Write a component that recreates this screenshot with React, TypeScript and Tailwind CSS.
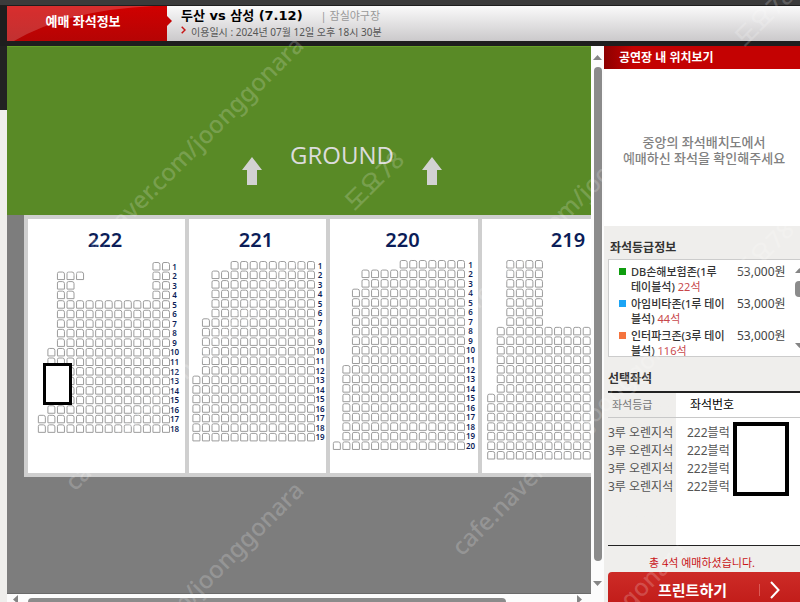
import React from "react";

type Range = [number, number];

interface Block {
  name: string;
  width: string;
  // x and y of the top right seat
  right: number;
  top: number;
  labelX?: number;
  // seats of each row, counted from the right
  rows: Range[][];
}

interface Grade {
  name: string;
  left: number;
  price: string;
  color: string;
}

const PITCH = 9.55;

const repeat = (count: number, ranges: Range[]): Range[][] =>
  Array.from({ length: count }, () => ranges);

const blocks: Block[] = [
  {
    name: "222",
    width: "w-[157px]",
    right: 134.5,
    top: 10.5,
    labelX: 146.5,
    rows: [
      [[0, 1]],
      [[0, 1], [9, 11]],
      ...repeat(2, [[0, 1], [10, 11]]),
      ...repeat(5, [[0, 11]]),
      ...repeat(7, [[0, 12]]),
      ...repeat(2, [[0, 13]]),
    ],
  },
  {
    name: "221",
    width: "w-[137px]",
    right: 118.5,
    top: 9.5,
    labelX: 131,
    rows: [
      [[0, 8]],
      ...repeat(5, [[0, 10]]),
      ...repeat(6, [[0, 11]]),
      ...repeat(7, [[0, 12]]),
    ],
  },
  {
    name: "220",
    width: "w-[148px]",
    right: 127.5,
    top: 8.5,
    labelX: 140.5,
    rows: [
      [[0, 6]],
      ...repeat(2, [[0, 10]]),
      ...repeat(8, [[0, 11]]),
      ...repeat(8, [[0, 12]]),
      [[0, 13]],
    ],
  },
  {
    name: "219",
    width: "w-[175px]",
    right: 158.5,
    top: 8.5,
    rows: [
      ...repeat(7, [[11, 14]]),
      ...repeat(7, [[0, 15]]),
      ...repeat(7, [[0, 16]]),
    ],
  },
];

const grades: Grade[] = [
  { name: "DB손해보험존(1루 테이블석)", left: 22, price: "53,000원", color: "bg-[#0f9d0f]" },
  { name: "아임비타존(1루 테이블석)", left: 44, price: "53,000원", color: "bg-[#1ba4f5]" },
  { name: "인터파크존(3루 테이블석)", left: 116, price: "53,000원", color: "bg-[#f5743e]" },
];

const tickets = [1, 2, 3, 4].map((id) => ({ id, grade: "3루 오렌지석", seat: "222블럭" }));

const watermarks = [
  { x: 73, y: 279, text: "cafe.naver.com/joonggonara" },
  { x: 75, y: 492, text: "cafe.naver.com/joonggonara" },
  { x: 73, y: 724, text: "cafe.naver.com/joonggonara" },
  { x: 462, y: 557, text: "cafe.naver.com/joonggonara" },
  { x: 460, y: 328, text: "cafe.naver.com/joonggonara" },
  { x: 456, y: 784, text: "cafe.naver.com/joonggonara" },
  { x: 355, y: 212, text: "도요78" },
  { x: 745, y: 48, text: "도요78" },
  { x: 745, y: 282, text: "도요78" },
];

const SeatBlock = ({ block }: { block: Block }) => {
  const seats: React.ReactNode[] = [];
  block.rows.forEach((ranges, row) => {
    const y = block.top + row * PITCH;
    ranges.forEach(([from, to]) => {
      for (let i = from; i <= to; i++) {
        const x = block.right - i * PITCH;
        seats.push(
          <path
            key={`${row}-${i}`}
            d={`M${x} ${y + 7.5}v-6q0-1.500 1.500-1.500h3.500q2 0 2 2v5.500z`}
          />
        );
      }
    });
  });

  return (
    <div className={`${block.width} shrink-0 bg-white pt-[9px]`}>
      <h2 className="pr-[3px] text-center text-[20px] leading-6 font-semibold text-[#0b1d58]">
        {block.name}
      </h2>
      <svg className="block h-[221px] w-full" aria-label={`${block.name} 좌석`}>
        <g fill="#fff" stroke="#9c9c9c" strokeWidth="1">
          {seats}
        </g>
        {block.labelX && (
          <g fill="#0b1d58" fontSize="8" fontWeight="600" textAnchor="middle">
            {block.rows.map((_, row) => (
              <text key={row} x={block.labelX} y={block.top + row * PITCH + 7}>
                {row + 1}
              </text>
            ))}
          </g>
        )}
        {block.name === "222" && (
          <rect x="16.5" y="112.5" width="26" height="39" fill="#fff" stroke="#000" strokeWidth="3" />
        )}
      </svg>
    </div>
  );
};

const UpArrow = () => (
  <svg width="20" height="28" viewBox="0 0 20 28" className="mt-4 shrink-0">
    <path d="M10 0L20 13H15V28H5V13H0z" fill="#d2d2d2" />
  </svg>
);

const Triangle = ({ className }: { className: string }) => (
  <svg width="9" height="5" viewBox="0 0 9 5" className={`shrink-0 ${className}`}>
    <path d="M4.500 0L9 5H0z" fill="#858585" />
  </svg>
);

const Header = () => (
  <header className="border-t-[5px] border-[#3b3b3b] bg-[#1e1e1e] pt-px pb-[5px] pl-[7px]">
    <div className="flex h-[35px] bg-gradient-to-b from-[#fafafa] to-[#cbc9cb]">
      <div className="relative flex w-[160px] shrink-0 items-center justify-center bg-gradient-to-b from-[#d00000] to-[#b50404] pb-[6px]">
        <svg className="absolute inset-0 h-full w-full" viewBox="0 0 160 35" preserveAspectRatio="none">
          <path d="M0 0H147Q60 4 7 35H0z" fill="#fff" fillOpacity=".18" />
        </svg>
        <svg className="absolute top-[10px] -right-[5px]" width="5" height="10" viewBox="0 0 5 10">
          <path d="M0 0L5 5L0 10z" fill="#c40202" />
        </svg>
        <h1 className="relative pr-2 text-[13px] leading-5 font-bold text-white">예매 좌석정보</h1>
      </div>
      <div className="pl-[14px]">
        <div className="flex items-center">
          <p className="font-['DejaVu_Sans','Noto_Sans_CJK_KR',sans-serif] text-[13px] leading-5 font-bold text-black">
            두산 vs 삼성 (7.12)
          </p>
          <p className="pl-[18px] text-[11px] leading-5 text-[#999]">| 잠실야구장</p>
        </div>
        <p className="flex items-center gap-[5px] text-[10px] leading-3 text-[#555]">
          <svg width="5" height="8" viewBox="0 0 5 8" className="mb-1">
            <path d="M.7.7L4 4L.7 7.300" fill="none" stroke="#c71515" strokeWidth="1.500" />
          </svg>
          이용일시 : 2024년 07월 12일 오후 18시 30분
        </p>
      </div>
    </div>
  </header>
);

const SeatMap = () => (
  <main className="flex min-w-0 flex-1 flex-col bg-[#fcfcfc]">
    <div className="flex min-h-0 flex-1">
      <div className="min-w-0 flex-1 overflow-hidden border-b border-[#6a6a6a] bg-[#7d7d7d]">
        <div className="w-max min-w-full">
          <div className="flex h-[169px] items-start justify-center gap-7 border-t border-[#68a128] bg-[#598a26] pt-[94px]">
            <UpArrow />
            <p className="font-['Open_Sans',sans-serif] text-[24px] leading-7 font-medium text-[#dcdcdc]">GROUND</p>
            <UpArrow />
          </div>
          <div className="pr-4 pl-[17px]">
            <div className="flex w-max gap-1 bg-[#cfcfcf] p-1">
              {blocks.map((block) => (
                <SeatBlock key={block.name} block={block} />
              ))}
            </div>
          </div>
        </div>
      </div>
      <div className="flex w-[13px] shrink-0 flex-col items-center pt-[9px] pb-2">
        <Triangle className="" />
        <div className="mt-[7px] mb-5 w-2 flex-1 rounded-full bg-[#8b8b8b]" />
        <Triangle className="rotate-180" />
      </div>
    </div>
    <div className="flex h-2 shrink-0 items-end overflow-hidden">
      <Triangle className="ml-1 -rotate-90" />
      <div className="ml-2 h-1 w-4/5 rounded-t bg-[#8b8b8b]" />
      <Triangle className="mr-5 ml-auto rotate-90" />
    </div>
  </main>
);

const SidePanel = () => (
  <aside className="flex w-[196px] shrink-0 flex-col overflow-hidden bg-[#efeeec]">
    <h2 className="h-[23px] shrink-0 bg-gradient-to-r from-[#8d0000] to-[#c40202] to-15% pl-[15px] text-[12px] leading-6 font-bold text-white">
      공연장 내 위치보기
    </h2>
    <div className="flex h-[157px] shrink-0 items-center justify-center bg-white pt-1 pl-1">
      <p className="text-center text-[13px] leading-4 font-medium text-[#808080]">
        중앙의 좌석배치도에서
        <br />
        예매하신 좌석을 확인해주세요
      </p>
    </div>

    <div className="shrink-0 pt-3 pl-1">
      <h3 className="pl-[2px] text-[12px] leading-5 font-bold text-[#333]">좌석등급정보</h3>
      <div className="mt-px flex h-[98px] overflow-hidden border border-r-0 border-[#ccc] bg-white">
        <ul className="w-[184px] shrink-0 pt-1">
          {grades.map((grade) => (
            <li key={grade.name} className="flex h-8 items-start pl-[10px]">
              <span className={`mt-1 h-[7px] w-[7px] shrink-0 ${grade.color}`} />
              <p className="ml-[5px] w-[98px] shrink-0 text-[11px] leading-[15px] font-medium text-[#333]">
                {grade.name} <span className="font-normal text-[#c8474b]">{grade.left}석</span>
              </p>
              <p className="ml-2 text-[12px] leading-[15px] text-[#444]">{grade.price}</p>
            </li>
          ))}
        </ul>
        <div className="flex w-3 shrink-0 flex-col items-center py-2">
          <Triangle className="" />
          <div className="mt-2 h-4 w-2 shrink-0 rounded-full bg-[#8b8b8b]" />
          <Triangle className="mt-auto rotate-180" />
        </div>
      </div>
    </div>

    <div className="shrink-0 pt-3 pl-1">
      <h3 className="text-[12px] leading-5 font-bold text-[#333]">선택좌석</h3>
      <div className="relative mt-[2px] h-[155px] border-t-2 border-b border-[#222] bg-gradient-to-r from-[#efeeec] from-[68px] to-white to-[68px]">
        <table className="w-full border-collapse text-left text-[12px] text-[#555]">
          <thead>
            <tr className="border-b border-[#c8c8c8]">
              <th className="w-[79px] py-0 pl-1 text-[11px] leading-6 font-normal text-[#777]">좌석등급</th>
              <th className="py-0 pl-[3px] leading-6 font-normal text-black">좌석번호</th>
            </tr>
          </thead>
          <tbody className="before:block before:h-[6px]">
            {tickets.map((ticket) => (
              <tr key={ticket.id}>
                <td className="p-0 leading-[18px]">{ticket.grade}</td>
                <td className="p-0 leading-[18px]">{ticket.seat}</td>
              </tr>
            ))}
          </tbody>
        </table>
        <div className="absolute top-[29px] left-[125px] h-[74px] w-14 border-4 border-black bg-white" />
      </div>
    </div>

    <p className="shrink-0 pt-2 text-center text-[11px] leading-[18px] text-[#c91518]">총 4석 예매하셨습니다.</p>
    <button
      type="button"
      className="ml-1 flex h-9 shrink-0 items-center rounded-tl-sm bg-gradient-to-b from-[#cd2b27] to-[#c01a17] pl-[50px] text-[15px] font-bold text-white"
    >
      프린트하기
      <span className="ml-8 h-3 w-px bg-[#dc5a56]" />
      <svg width="10" height="18" viewBox="0 0 10 18" className="ml-[10px]">
        <path d="M1 1L8.500 9L1 17" fill="none" stroke="#fff" strokeWidth="2" />
      </svg>
    </button>
  </aside>
);

const App = () => {
  return (
    <div className="relative flex h-screen flex-col overflow-hidden bg-[#efeeec] font-['Noto_Sans','Noto_Sans_CJK_KR',sans-serif]">
      <Header />
      <div className="flex min-h-0 flex-1">
        <div className="w-[7px] shrink-0">
          <div className="h-16 bg-[#222]" />
        </div>
        <SeatMap />
        <SidePanel />
      </div>
      <svg className="pointer-events-none absolute inset-0 h-full w-full" aria-hidden="true">
        <g fill="#fff" fillOpacity=".2" fontSize="24" fontWeight="500">
          {watermarks.map((mark) => (
            <text key={`${mark.x}-${mark.y}`} transform={`translate(${mark.x} ${mark.y}) rotate(-45)`}>
              {mark.text}
            </text>
          ))}
        </g>
      </svg>
    </div>
  );
};

export default App;
